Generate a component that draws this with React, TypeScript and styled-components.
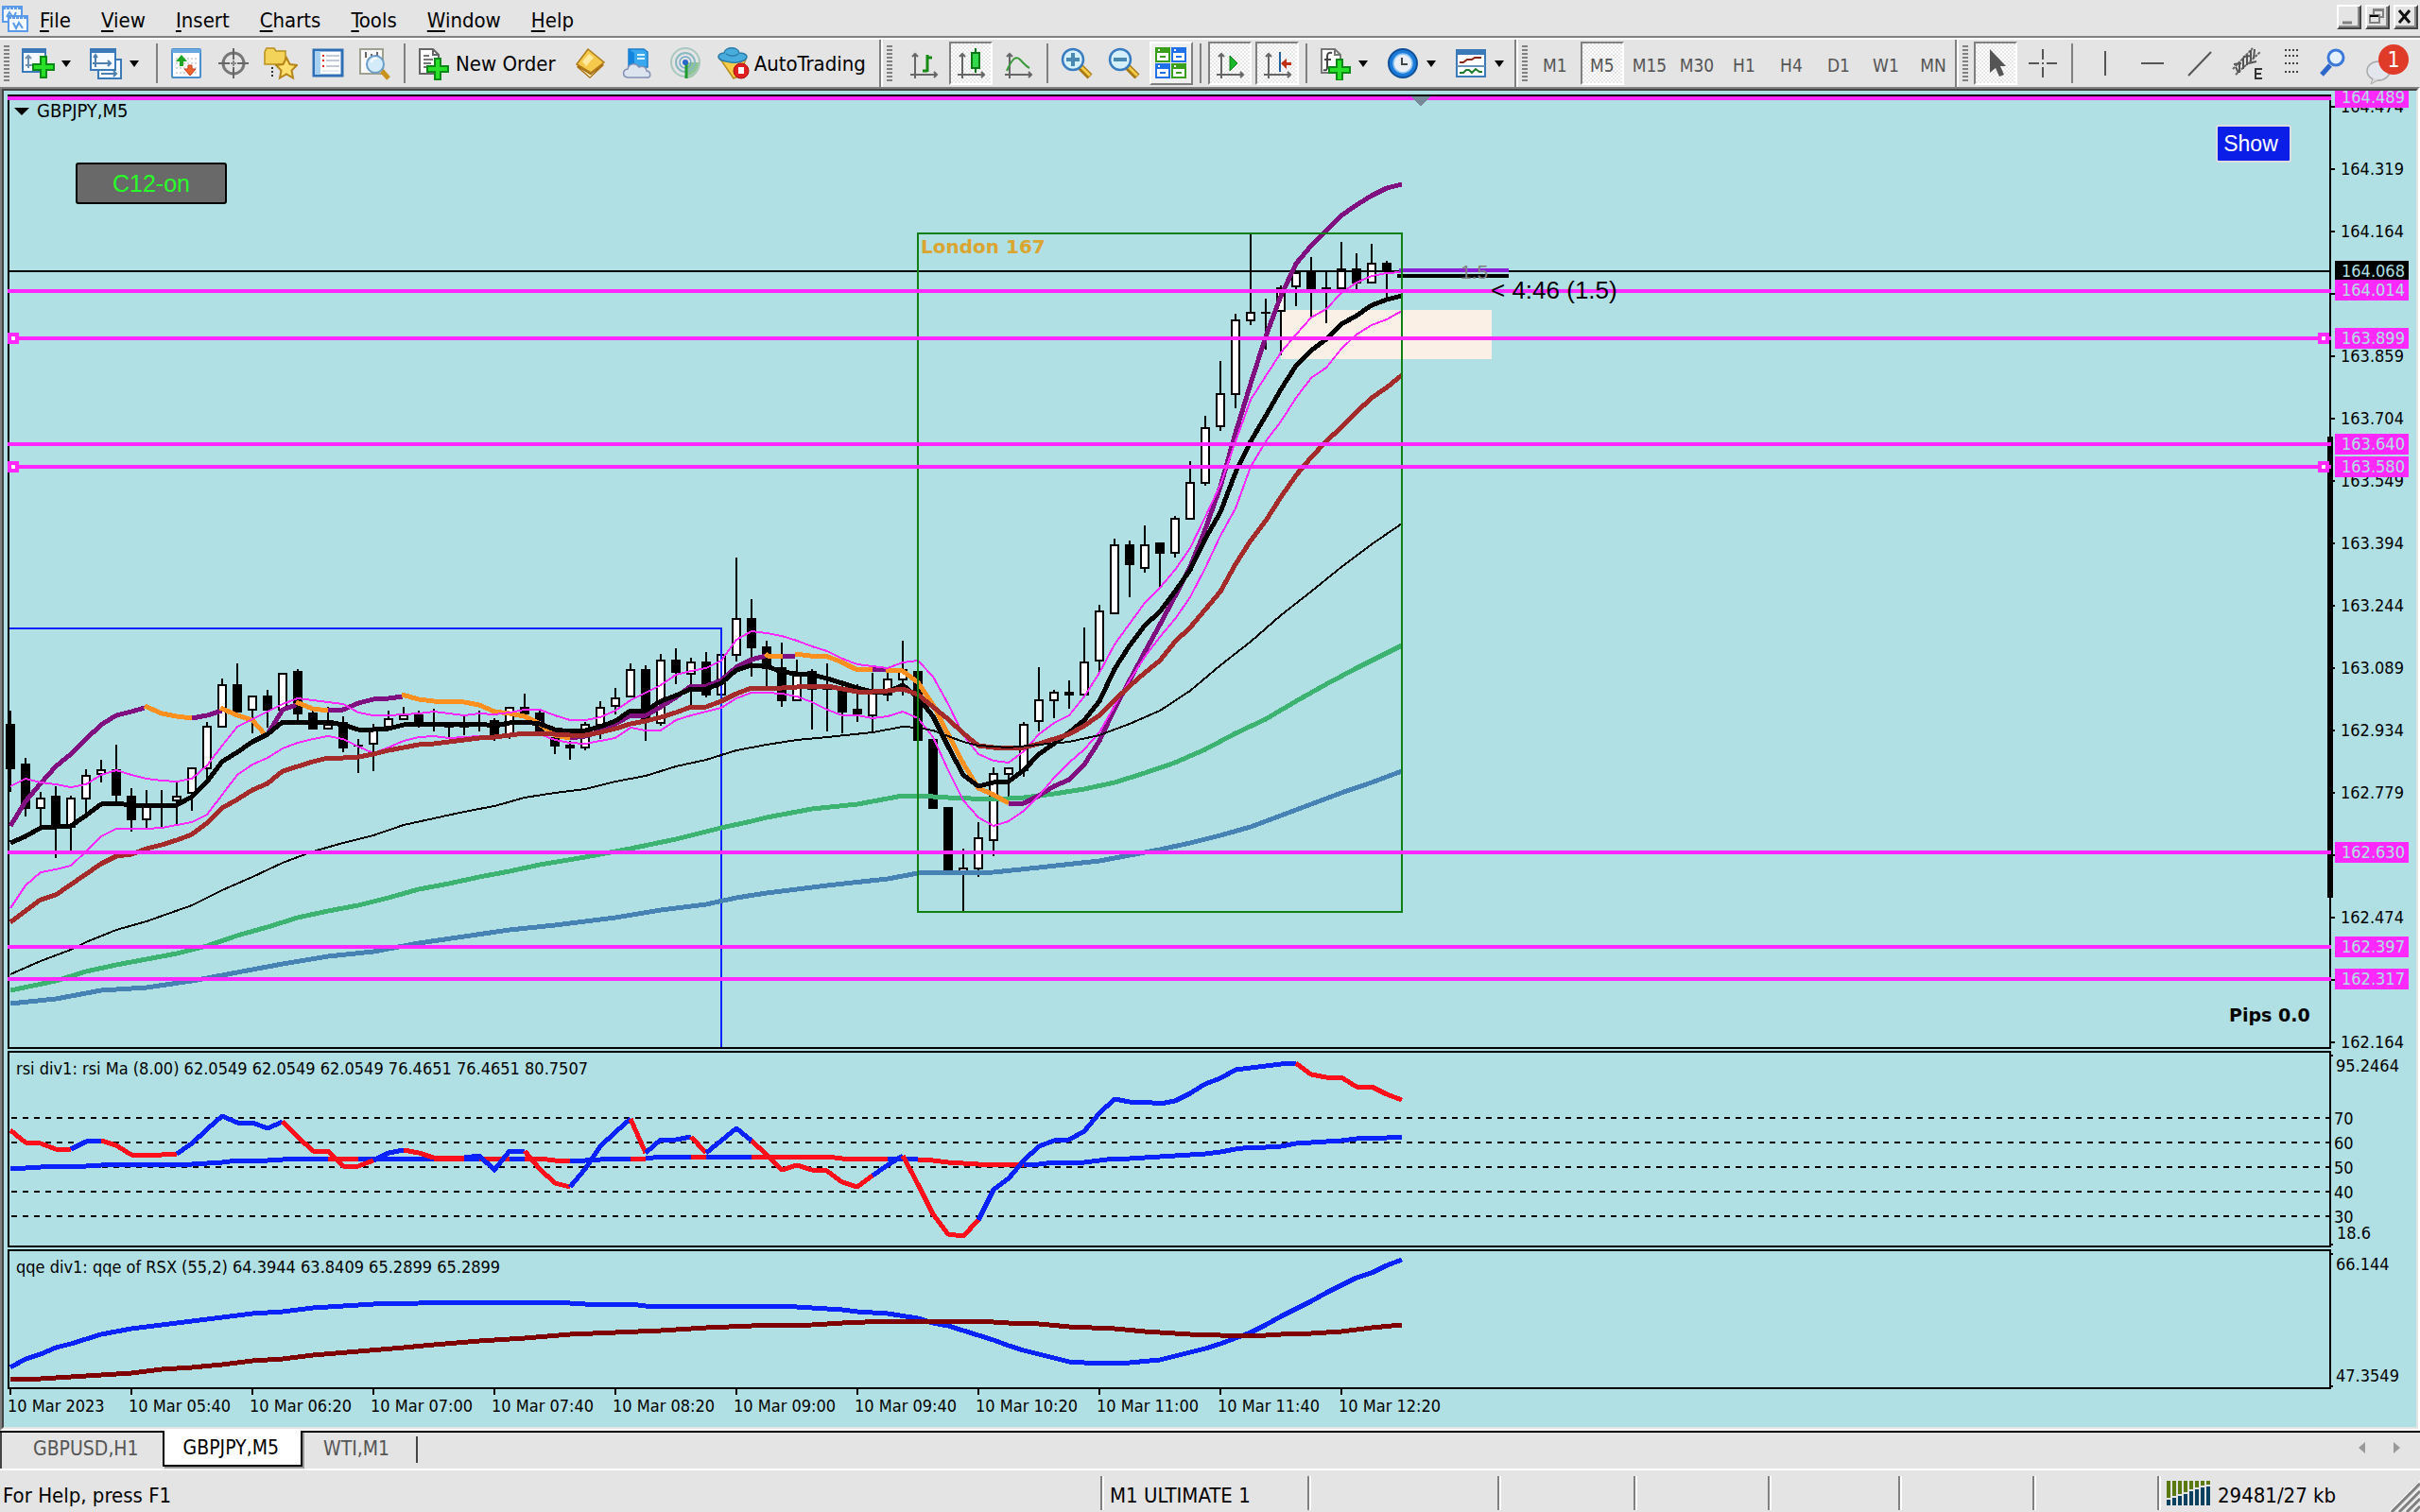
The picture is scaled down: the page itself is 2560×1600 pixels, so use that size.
import React from 'react';
import styled, { createGlobalStyle, css } from 'styled-components';

const UI = `'DejaVu Sans Condensed', 'Noto Sans', sans-serif`;
const FACE = '#e4e4e4';
const SKY = '#b0e0e4';
const MAGENTA = '#ff28ff';
const BLUE = '#0a22ff';
const RED = '#ff0f1c';
const PURPLE = '#800f80';
const ORANGE = '#ff9020';

const GlobalStyle = createGlobalStyle`
  * { box-sizing: border-box; }
  body { margin: 0; background: ${FACE}; font-family: ${UI}; color: #000; }
  button { font-family: inherit; color: inherit; padding: 0; border: 0; background: none; }
`;

const Page = styled.div`
  min-height: 100vh;
  display: flex;
  flex-direction: column;
  background: ${FACE};
`;

/* ---------- menu bar ---------- */

const MenuBar = styled.header`
  display: flex;
  align-items: center;
  justify-content: space-between;
  height: 42px;
  padding: 0 2px;
  border-bottom: 2px solid #fff;
  box-shadow: inset 0 -2px 0 #808080;
`;

const MenuList = styled.nav`
  display: flex;
  align-items: center;
  gap: 32px;
`;

const MenuItem = styled.button`
  font-size: 22px;
  line-height: 32px;
  padding-top: 4px;
  &::first-letter {
    text-decoration: underline;
    text-decoration-thickness: 2px;
    text-underline-offset: 3px;
  }
`;

const AppMark = styled.svg`
  width: 28px;
  height: 28px;
  margin-right: -20px;
`;

const WindowButtons = styled.div`
  display: flex;
  gap: 4px;
  padding-bottom: 4px;
`;

const WindowButton = styled.button`
  width: 26px;
  height: 26px;
  border: 2px solid;
  border-color: #fff #444 #444 #fff;
  background: ${FACE};
  box-shadow: inset -2px -2px 0 #8a8a8a;
  svg { display: block; }
`;

/* ---------- tool bar ---------- */

const ToolBar = styled.div`
  display: flex;
  height: 50px;
`;

const Group = styled.div<{ $last?: boolean }>`
  flex: none;
  display: flex;
  align-items: center;
  padding-left: 4px;
  ${p => !p.$last && css`
    border-right: 2px solid #fff;
    box-shadow: inset -2px 0 0 #808080;
  `}
`;

const Grip = styled.span`
  flex: none;
  width: 6px;
  height: 38px;
  background: repeating-linear-gradient(#808080 0 2px, transparent 2px 4px);
`;

const Divider = styled.span`
  flex: none;
  width: 2px;
  height: 42px;
  margin: 0 5px;
  background: #808080;
`;

const Tool = styled.button<{ $state?: 'pressed' | 'raised' }>`
  flex: none;
  display: flex;
  align-items: center;
  justify-content: center;
  width: 46px;
  height: 46px;
  margin: 0 2px;
  font-size: 19px;
  color: #555;
  border: 2px solid transparent;
  svg { display: block; flex: none; }
  ${p => p.$state === 'pressed' && css`
    border-color: #808080 #fff #fff #808080;
    background: repeating-conic-gradient(#fff 0 25%, #e8e8e8 0 50%) 0 0 / 4px 4px;
  `}
  ${p => p.$state === 'raised' && css`
    border-color: #fff #808080 #808080 #fff;
    background: #f0f0f0;
  `}
`;

const PeriodTool = styled(Tool)`
  padding-top: 3px;
`;

const CompactTool = styled(Tool)`
  width: 40px;
`;

const WideTool = styled(Tool)`
  width: 52px;
`;

const DropTool = styled(Tool)`
  width: 64px;
  margin: 0 4px;
  gap: 7px;
  justify-content: flex-start;
  &::after {
    content: '';
    border: 5px solid transparent;
    border-top: 7px solid #000;
    border-bottom: 0;
  }
`;

const TextTool = styled(Tool)`
  width: auto;
  gap: 4px;
  font-size: 22px;
  color: #000;
`;

const Gap = styled.span<{ $w: number }>`
  flex: none;
  width: ${p => p.$w}px;
`;

/* ---------- chart window ---------- */

const ChartWindow = styled.main`
  position: relative;
  background: ${SKY};
  border: 2px solid;
  border-color: #808080 #fff #fff #808080;
`;

const ChartInner = styled.div`
  border: 2px solid;
  border-color: #444 ${FACE} ${FACE} #444;
`;

const Pane = styled.svg`
  display: block;
  width: 100%;
  height: auto;
  overflow: visible;
  font-family: ${UI};
  font-size: 18px;
`;

const ChartButton = styled.button`
  position: absolute;
  left: 78px;
  top: 78px;
  width: 160px;
  height: 44px;
  border: 2px solid #000;
  border-radius: 3px;
  background: #696969;
  color: #28ff28;
  font: 25px/36px 'Liberation Sans', sans-serif;
`;

const ShowButton = styled(ChartButton)`
  left: auto;
  right: 134px;
  top: 38px;
  width: 80px;
  height: 40px;
  padding-right: 6px;
  border-color: #dcdce0;
  background: #0a1ee8;
  color: #fff;
  font-size: 23px;
`;

/* ---------- tabs and status ---------- */

const TabBar = styled.nav`
  display: flex;
  height: 40px;
  padding-left: 2px;
  border-top: 2px solid #000;
  box-shadow: inset 4px 0 0 -2px #444;
`;

const Tab = styled.button<{ $active?: boolean }>`
  position: relative;
  height: 34px;
  padding: 0 22px;
  font-size: 21px;
  color: #555;
  ${p => p.$active && css`
    height: 38px;
    margin-top: -2px;
    padding: 0 23px 0 20px;
    color: #000;
    background: #fff;
    border: solid #000;
    border-width: 0 2px 2px;
    box-shadow: 2px 2px 0 #999;
  `}
`;

const TabEnd = styled.span`
  width: 2px;
  height: 28px;
  margin: 4px 0 0 6px;
  background: #444;
`;

const TabArrows = styled.svg`
  margin: 9px 18px 0 auto;
`;

const StatusBar = styled.footer`
  flex: 1;
  display: flex;
  align-items: flex-end;
  min-height: 46px;
  padding-bottom: 2px;
  border-top: 2px solid #fff;
  font-size: 22px;
`;

const StatusCell = styled.div<{ $w?: number }>`
  display: flex;
  align-items: center;
  gap: 8px;
  height: 36px;
  padding: 4px 0 0 8px;
  ${p => (p.$w ? `width: ${p.$w}px;` : 'flex: 1;')}
  border-left: 2px solid #808080;
  box-shadow: inset 2px 0 0 #fff;
  &:first-child {
    padding-left: 3px;
    border-left: 0;
    box-shadow: none;
  }
`;

const Bars = styled.svg`
  margin-bottom: 4px;
`;

const Grow = styled.svg`
  flex: none;
  margin-bottom: -2px;
`;

/* ---------- icons ---------- */

const Icon = ({ children }: { children: React.ReactNode }) => (
  <svg width="36" height="36" viewBox="0 0 36 36" fill="none">{children}</svg>
);

const Plus = ({ x, y, s = 1 }: { x: number; y: number; s?: number }) => (
  <path
    d="M-3-11h6v8h8v6h-8v8h-6v-8h-8v-6h8z"
    transform={`translate(${x} ${y}) scale(${s})`}
    fill="#28e028"
    stroke="#0a8a14"
    strokeWidth="2"
  />
);

const Axes = () => (
  <path d="M9 34V8M6 11l3-3 3 3M4 30h28M29 27l3 3-3 3" stroke="#666" strokeWidth="2" />
);

const NewChartIcon = () => (
  <Icon>
    <rect x="2" y="3" width="24" height="24" fill="#f4f9ff" stroke="#3a7ab8" strokeWidth="2" />
    <path d="M1 2h26v5H1z" fill="#3a7ab8" />
    <path d="M8 10v13M5 13l3-3 3 3M5 20h10" stroke="#7090b0" strokeWidth="2" />
    <Plus x={24} y={22} />
  </Icon>
);
const ProfilesIcon = () => (
  <Icon>
    <rect x="10" y="14" width="24" height="20" fill="#f4f9ff" stroke="#3a7ab8" strokeWidth="2" />
    <path d="M13 29h16M26 26l3 3-3 3" stroke="#5080b0" strokeWidth="2" />
    <rect x="2" y="3" width="26" height="22" fill="#f4f9ff" stroke="#3a7ab8" strokeWidth="2" />
    <path d="M1 2h28v5H1z" fill="#3a7ab8" />
    <path d="M7 10v12M4 18h19M20 15l3 3-3 3M5 12l2-3 2 3" stroke="#5080b0" strokeWidth="2" />
  </Icon>
);
const MarketWatchIcon = () => (
  <Icon>
    <rect x="3" y="3" width="30" height="30" rx="1" fill="#fff" stroke="#4a90d0" strokeWidth="2" />
    <path d="M3 3h30v4H3z" fill="#6aa8e0" />
    <path d="M7 13h22M7 18h22M7 23h22M7 28h22" stroke="#d8d8d8" strokeWidth="2" strokeDasharray="2 2" />
    <path d="M13 9l6 7h-4v5h-4v-5H7z" fill="#1fa51f" />
    <path d="M22 31l-6-7h4v-4h4v4h4z" fill="#f0642c" stroke="#c8401c" />
  </Icon>
);
const DataWindowIcon = () => (
  <Icon>
    <circle cx="18" cy="18" r="11" stroke="#777" strokeWidth="3" />
    <path d="M18 2v12M18 22v12M2 18h12M22 18h12" stroke="#666" strokeWidth="2" />
    <path d="M15 18h6M18 15v6" stroke="#888" strokeWidth="2" />
  </Icon>
);
const NavigatorIcon = () => (
  <Icon>
    <path d="M1 6l2-4h8l2 3h10v14H1z" fill="#f3d35a" stroke="#b98f1c" strokeWidth="1.500" />
    <path d="M9 22v12" stroke="#333" strokeWidth="2" strokeDasharray="2 2" />
    <path d="M24 12l3.500 7 7.500 1-5.500 5.500 1.500 8-7-4-7 4 1.500-8L13 20l7.500-1z" fill="#ffe070" stroke="#b5851a" strokeWidth="2" />
  </Icon>
);
const TerminalIcon = () => (
  <Icon>
    <rect x="3" y="4" width="30" height="27" fill="#fff" stroke="#2f6fb5" strokeWidth="3" />
    <path d="M4 5h6v25H4z" fill="#a8d0f0" />
    <path d="M12 10h2M12 15h2M12 21h2" stroke="#e02020" strokeWidth="2" />
    <path d="M16 10h14M16 15h14M16 21h14" stroke="#b0b8c8" strokeWidth="1.500" />
    <path d="M12 26h18" stroke="#d0d8e8" />
  </Icon>
);
const TesterIcon = () => (
  <Icon>
    <rect x="2" y="3" width="24" height="26" fill="#fafafa" stroke="#a0a090" strokeWidth="2" />
    <path d="M8 6v6M14 8v6M20 6v6" stroke="#666" strokeWidth="2" />
    <path d="M25 26l7 8" stroke="#c8921c" strokeWidth="5" />
    <circle cx="18" cy="19" r="9" fill="#d4ebfa" stroke="#6a9cc8" strokeWidth="2" />
    <path d="M14 17c0-3 3-5 6-4" stroke="#fff" strokeWidth="2" />
  </Icon>
);
const NewOrderIcon = () => (
  <Icon>
    <path d="M2 3h14l6 6v20H2z" fill="#fff" stroke="#666" strokeWidth="2" />
    <path d="M16 3v6h6" stroke="#666" strokeWidth="2" />
    <path d="M6 10h6M6 14h10M6 18h8M6 22h6" stroke="#777" strokeWidth="2" />
    <Plus x={21} y={24} />
  </Icon>
);
const MetaEditorIcon = () => (
  <Icon>
    <path d="M3 22L15 5l17 15-15 14z" fill="#b8781a" />
    <path d="M3 19L15 3l17 14-14 11z" fill="#f4c94c" stroke="#b07a18" strokeWidth="1.500" />
    <path d="M4 21l14 9 13-11-14 14z" fill="#f8e8b0" stroke="#a06a10" />
    <path d="M9 16l7-8 5 4-8 9z" fill="#ffe9a0" />
  </Icon>
);
const MarketIcon = () => (
  <Icon>
    <path d="M8 3h16l4 3v16H8z" fill="#38a8f0" stroke="#1c7cc8" strokeWidth="1.500" />
    <path d="M8 3l6 4v14H8z" fill="#1484dc" />
    <path d="M17 9h8M17 13h8" stroke="#d8f0ff" strokeWidth="2" />
    <path d="M8 33c-7 0-7-8-1-9 1-6 9-7 12-2 5-2 8 1 8 4 5 1 5 7 0 7z" fill="#dce4f0" stroke="#8090b4" strokeWidth="1.500" />
  </Icon>
);
const SignalsIcon = () => (
  <Icon>
    <path d="M18 17h15a15 15 0 0 1-14 17z" fill="#58b058" opacity=".6" />
    <circle cx="18" cy="17" r="15" stroke="#a8c8c0" strokeWidth="2" />
    <circle cx="18" cy="17" r="10" stroke="#88b8c0" strokeWidth="2" />
    <circle cx="18" cy="17" r="6" stroke="#70a8c8" strokeWidth="1.500" />
    <path d="M19 17v17" stroke="#1f9a2f" strokeWidth="3" />
    <circle cx="18" cy="17" r="3" fill="#2866c8" />
  </Icon>
);
const AutoTradingIcon = () => (
  <Icon>
    <path d="M3 12l14 4 14-3-6 18-7 3z" fill="#f6cc48" stroke="#b98a1c" strokeWidth="1.500" />
    <path d="M2 11c0-3 4-4 6-4C9 0 23 0 24 7c5 0 8 2 8 4 0 5-11 7-16 6C9 16 2 15 2 11z" fill="#48acdc" stroke="#2a7ba8" strokeWidth="1.500" />
    <path d="M10 8c4 3 10 3 13 0" stroke="#2a7ba8" strokeWidth="1.500" />
    <circle cx="26" cy="26" r="8" fill="#e02020" stroke="#a81010" />
    <rect x="23" y="22" width="6" height="7" fill="#fff" />
  </Icon>
);
const BarChartIcon = () => (
  <Icon>
    <Axes />
    <path d="M22 9v18M22 12h5M17 26h5" stroke="#158a15" strokeWidth="3" />
  </Icon>
);
const CandleIcon = () => (
  <Icon>
    <Axes />
    <path d="M23 2v26" stroke="#0c7a14" strokeWidth="2" />
    <rect x="19" y="7" width="8" height="16" fill="#34d84c" stroke="#0c7a14" strokeWidth="2" />
  </Icon>
);
const LineChartIcon = () => (
  <Icon>
    <Axes />
    <path d="M6 26C12 12 16 10 20 14c4 4 6 7 10 9" stroke="#3a9a3a" strokeWidth="2" />
  </Icon>
);
const ZoomIcon = ({ plus }: { plus?: boolean }) => (
  <Icon>
    <path d="M22 22l10 10" stroke="#a87814" strokeWidth="7" />
    <path d="M23 22l9 9" stroke="#f4cc48" strokeWidth="3" />
    <circle cx="14" cy="14" r="11" fill="#d4f0fc" stroke="#3a7cc0" strokeWidth="2.500" />
    <path d={plus ? 'M7 14h14M14 7v14' : 'M7 14h14'} stroke="#4a88b4" strokeWidth="4" />
  </Icon>
);
const TileIcon = () => (
  <Icon>
    {[[1, 1, '#3aa01c'], [18, 1, '#2070e8'], [1, 18, '#2070e8'], [18, 18, '#3aa01c']].map(([x, y, c]) => (
      <g key={`${x}-${y}`} transform={`translate(${x} ${y})`}>
        <path d="M0 0h16v16H0z" fill={c as string} />
        <path d="M2 6h12v8H2z" fill="#fff" />
        <path d="M5 10h6" stroke={c as string} strokeWidth="2" />
        <path d="M3 3h2" stroke="#fff" strokeWidth="2" />
      </g>
    ))}
  </Icon>
);
const AutoScrollIcon = () => (
  <Icon>
    <Axes />
    <path d="M18 10l8 8-8 8z" fill="#18b828" stroke="#0c7a14" />
  </Icon>
);
const ShiftIcon = () => (
  <Icon>
    <Axes />
    <path d="M21 6v21" stroke="#20609c" strokeWidth="2" />
    <path d="M22 18l6-5v4h5v3h-5v4z" fill="#c03010" />
  </Icon>
);
const IndicatorsIcon = () => (
  <Icon>
    <path d="M4 3h14l6 6v19H4z" fill="#fff" stroke="#777" strokeWidth="2" />
    <path d="M18 3v6h6" stroke="#777" strokeWidth="2" />
    <path d="M15 7c-5-1-5 2-5 5v10c0 3-1 4-4 3M7 14h7" stroke="#444" strokeWidth="2" />
    <Plus x={23} y={25} />
  </Icon>
);
const PeriodIcon = () => (
  <Icon>
    <circle cx="18" cy="18" r="15" fill="#1c7ad8" stroke="#0f4f98" strokeWidth="2" />
    <circle cx="18" cy="18" r="10" fill="#e8eef4" stroke="#8cc4f4" strokeWidth="1.500" />
    <path d="M17 12v7h6" stroke="#444" strokeWidth="2" />
  </Icon>
);
const TemplateIcon = () => (
  <Icon>
    <rect x="3" y="4" width="30" height="28" fill="#fff" stroke="#3a7ab8" strokeWidth="2" />
    <path d="M2 3h32v6H2z" fill="#3a7ab8" />
    <path d="M3 21h30" stroke="#6a94bc" strokeWidth="2" />
    <path d="M6 17h4l4-3h5l3-2h7" stroke="#8c2410" strokeWidth="2" />
    <path d="M6 28h4l3-3h3l3 3 4-4 4 3h3" stroke="#1c7c2c" strokeWidth="2" />
  </Icon>
);
const CursorIcon = () => (
  <Icon>
    <path d="M12 3v25l6-5 4 9 5-2-4-9h6z" fill="#555" />
  </Icon>
);
const CrossIcon = () => (
  <Icon>
    <path d="M18 3v11M18 22v11M3 18h11M22 18h11M17 18h2" stroke="#555" strokeWidth="2" />
  </Icon>
);
const VLineIcon = () => <Icon><path d="M18 5v26" stroke="#555" strokeWidth="2" /></Icon>;
const HLineIcon = () => <Icon><path d="M6 18h24" stroke="#555" strokeWidth="2" /></Icon>;
const TrendIcon = () => <Icon><path d="M6 31L30 6" stroke="#555" strokeWidth="2" /></Icon>;
const ChannelIcon = () => (
  <Icon>
    <path d="M3 24L24 2M6 30L32 6" stroke="#666" strokeWidth="2" strokeDasharray="3 1" />
    <path d="M6 22l3 6M10 18v10M14 12v12M18 9v11M22 4v12M26 3l-1 10M4 19l8-1M14 11l8-1M20 18l8-2" stroke="#555" strokeWidth="2" />
    <path d="M34 24h-7v10h7M27 29h6" stroke="#333" strokeWidth="2" />
  </Icon>
);
const FiboIcon = () => (
  <Icon>
    <path d="M11 4h14M11 10h14M11 18h14M11 27h14" stroke="#444" strokeWidth="2" strokeDasharray="2 2" />
  </Icon>
);
const SearchIcon = () => (
  <Icon>
    <path d="M15 20L6 30" stroke="#2c66c8" strokeWidth="5" />
    <circle cx="21" cy="12" r="8" fill="#e4f0ff" stroke="#3a78dc" strokeWidth="3" />
  </Icon>
);
const Chat = () => (
  <svg width="48" height="46" viewBox="0 0 48 46" fill="none">
    <ellipse cx="14" cy="31" rx="12" ry="10" fill="#e4e6ee" stroke="#a8a8a8" strokeWidth="1.500" />
    <path d="M8 39l-2 6 9-5" fill="#d8d8d8" stroke="#a8a8a8" />
    <circle cx="30" cy="19" r="16" fill="#e03a28" />
    <text x="30" y="27" fill="#fff" fontSize="23" textAnchor="middle" fontFamily={UI}>1</text>
  </svg>
);

/* ---------- chart data: positions per five-minute bar ---------- */

const barX = (k: number) => 11 + 16 * k;

// [high, body top, body bottom, low, rising]
const candles: [number, number, number, number, number][] = [
  [752, 766, 814, 838, 0], [802, 808, 856, 864, 0], [838, 844, 856, 876, 1], [832, 842, 876, 908, 0],
  [842, 844, 876, 900, 1], [814, 820, 846, 862, 1], [804, 814, 820, 828, 1], [788, 814, 842, 848, 0],
  [834, 842, 868, 880, 0], [836, 852, 868, 876, 1], [836, 850, 852, 876, 0], [828, 842, 848, 872, 1],
  [812, 812, 840, 858, 1], [764, 768, 814, 824, 1], [718, 724, 770, 770, 1], [702, 724, 754, 754, 0],
  [736, 736, 752, 776, 1], [730, 736, 752, 770, 0], [712, 712, 752, 752, 1], [708, 710, 756, 762, 0],
  [752, 754, 772, 772, 0], [748, 766, 772, 772, 1], [758, 764, 792, 796, 0], [782, 788, 790, 818, 0],
  [766, 772, 788, 816, 1], [752, 760, 770, 770, 1], [748, 756, 762, 762, 1], [752, 756, 766, 770, 0],
  [750, 764, 766, 774, 0], [766, 768, 770, 780, 0], [758, 768, 770, 778, 0], [752, 764, 766, 774, 0],
  [760, 762, 778, 784, 0], [748, 748, 778, 782, 1], [734, 748, 756, 756, 0], [752, 754, 774, 774, 0],
  [778, 780, 790, 798, 0], [784, 788, 792, 804, 0], [764, 766, 792, 794, 1], [742, 748, 768, 782, 1],
  [728, 738, 748, 756, 1], [702, 708, 738, 738, 1], [704, 708, 762, 784, 0], [692, 698, 766, 768, 1],
  [686, 698, 712, 724, 0], [696, 700, 714, 748, 1], [690, 700, 736, 738, 0], [692, 692, 736, 736, 1],
  [590, 654, 694, 700, 1], [634, 654, 686, 716, 0], [678, 684, 708, 726, 0], [680, 706, 742, 748, 0],
  [698, 714, 742, 742, 1], [708, 710, 730, 772, 0], [702, 728, 730, 774, 0], [720, 730, 754, 776, 0],
  [724, 750, 756, 764, 0], [712, 732, 758, 774, 1], [710, 718, 736, 742, 1], [678, 708, 720, 736, 1],
  [710, 710, 784, 784, 0], [782, 782, 856, 856, 0], [854, 854, 922, 922, 0], [898, 918, 924, 964, 1],
  [870, 886, 920, 928, 1], [812, 818, 890, 906, 1], [812, 812, 820, 848, 1], [764, 766, 816, 822, 1],
  [706, 740, 764, 774, 1], [730, 732, 742, 760, 1], [720, 732, 736, 750, 0], [664, 700, 736, 736, 1],
  [640, 646, 700, 712, 1], [570, 576, 650, 650, 1], [572, 576, 598, 632, 0], [556, 576, 602, 606, 1],
  [574, 574, 586, 622, 0], [546, 548, 586, 590, 1], [488, 510, 550, 550, 1], [440, 452, 512, 514, 1],
  [382, 416, 452, 456, 1], [332, 338, 418, 432, 1], [248, 330, 340, 344, 1], [316, 330, 332, 370, 0],
  [302, 304, 330, 376, 1], [286, 288, 304, 324, 1], [272, 286, 306, 336, 0], [286, 304, 306, 342, 0],
  [256, 284, 306, 306, 1], [268, 284, 300, 306, 0], [258, 278, 300, 300, 1], [276, 278, 288, 316, 0],
];

const fastAverage = [
  892, 885, 876, 875, 874, 863, 851, 850, 852, 852, 852, 852, 843, 827, 806, 796, 785, 777, 764, 764, 764, 764, 767,
  772, 772, 771, 767, 766, 766, 766, 766, 766, 768, 765, 764, 766, 772, 774, 773, 769, 763, 752, 752, 742, 736, 729,
  729, 723, 709, 704, 705, 711, 713, 714, 718, 723, 728, 732, 732, 725, 738, 758, 790, 820, 832, 828, 827, 815, 798,
  787, 775, 762, 742, 708, 683, 662, 647, 626, 603, 570, 542, 500, 467, 440, 412, 387, 371, 359, 343, 334, 323, 317, 313,
];
const brownAverage = [
  976, 964, 952, 947, 936, 925, 914, 906, 904, 898, 894, 889, 883, 871, 855, 846, 836, 829, 816, 811, 806, 802, 802,
  801, 798, 794, 791, 788, 787, 785, 783, 781, 780, 778, 776, 776, 777, 778, 778, 775, 771, 766, 763, 759, 754, 748,
  748, 742, 734, 728, 728, 728, 727, 726, 726, 729, 732, 732, 731, 729, 735, 748, 761, 776, 789, 791, 792, 791, 787,
  782, 777, 768, 757, 741, 726, 712, 699, 679, 664, 645, 626, 597, 572, 551, 526, 503, 484, 467, 452, 436, 421, 410, 397,
];
const upperBand = [
  832, 824, 828, 830, 833, 830, 820, 815, 820, 824, 826, 827, 824, 810, 789, 769, 761, 753, 745, 739, 741, 743, 745,
  754, 757, 757, 756, 755, 753, 755, 757, 755, 756, 754, 751, 751, 757, 762, 762, 759, 752, 741, 733, 725, 714, 710,
  707, 699, 677, 668, 670, 673, 678, 684, 689, 697, 703, 705, 707, 701, 699, 716, 745, 778, 798, 805, 807, 795, 777,
  765, 757, 737, 712, 682, 660, 638, 622, 603, 580, 547, 513, 467, 423, 398, 373, 354, 336, 327, 310, 299, 292, 289, 288,
];
const lowerBand = [
  961, 937, 923, 920, 916, 901, 885, 877, 877, 877, 876, 873, 870, 862, 841, 820, 809, 802, 792, 786, 782, 779, 782,
  790, 797, 791, 784, 780, 779, 781, 780, 779, 780, 778, 775, 777, 783, 786, 787, 784, 781, 770, 773, 773, 762, 757,
  753, 749, 739, 733, 733, 734, 737, 743, 751, 757, 757, 760, 758, 753, 760, 780, 815, 847, 865, 874, 869, 858, 842,
  823, 807, 793, 775, 747, 720, 695, 674, 655, 632, 601, 567, 538, 494, 467, 446, 421, 400, 389, 369, 354, 344, 338, 329,
];

type Knot = [number, number];
const slowBlack: Knot[] = [
  [0, 1031], [2, 1017], [4, 1005], [5, 997], [7, 984], [9, 975], [12, 958], [14, 942], [16, 928], [18, 913], [20, 901],
  [22, 892], [24, 884], [26, 873], [28, 866], [30, 859], [32, 853], [34, 844], [36, 839], [38, 835], [40, 827], [42, 821],
  [44, 811], [46, 804], [48, 794], [50, 788], [52, 783], [54, 780], [57, 775], [59, 769], [60, 770], [61, 773], [62, 779],
  [63, 785], [64, 789], [66, 791], [68, 788], [70, 785], [72, 778], [74, 766], [76, 752], [78, 731], [80, 704], [82, 679],
  [84, 651], [86, 626], [88, 600], [90, 576], [91, 565], [92, 554],
];
const greenAverage: Knot[] = [
  [0, 1048], [3, 1038], [5, 1028], [7, 1021], [9, 1015], [11, 1009], [13, 1001], [15, 990], [17, 981], [19, 971],
  [21, 964], [23, 958], [25, 950], [27, 941], [29, 935], [31, 928], [33, 922], [35, 915], [38, 907], [41, 898], [44, 888],
  [47, 876], [49, 869], [50, 865], [53, 856], [56, 851], [59, 842], [60, 842], [62, 844], [65, 846], [67, 844],
  [69, 840], [71, 835], [73, 828], [75, 818], [77, 807], [79, 793], [81, 776], [83, 761], [85, 742], [87, 724], [89, 707],
  [91, 691], [92, 683],
];
const blueAverage: Knot[] = [
  [0, 1062], [3, 1057], [6, 1048], [9, 1045], [12, 1038], [15, 1029], [18, 1020], [21, 1012], [24, 1007], [27, 998],
  [30, 991], [33, 984], [36, 979], [40, 971], [43, 963], [46, 957], [48, 950], [50, 945], [54, 937], [58, 930],
  [60, 924], [65, 923], [68, 918], [72, 911], [76, 899], [78, 892], [80, 884], [82, 875], [84, 863], [86, 851], [88, 839],
  [90, 828], [92, 816],
];

// trend line, coloured by direction
const trend: [string, string][] = [
  [PURPLE, '11,874 27,848 43,829 59,811 75,798 91,782 107,767 123,757 139,753 153,749'],
  [ORANGE, '153,747 171,755 187,758 203,760'],
  [PURPLE, '203,760 219,757 235,752'],
  [ORANGE, '233,749 251,757 267,762 280,777'],
  [PURPLE, '283,777 291,764 299,751 313,746'],
  [ORANGE, '313,743 331,750 347,752'],
  [PURPLE, '347,752 363,751 379,744 395,740 411,739 426,737'],
  [ORANGE, '425,735 443,740 459,742 475,742 491,743 507,746 523,753 539,755 555,758 571,766 587,778 603,781'],
  [PURPLE, '603,781 619,779 635,774 651,766 667,757 683,757 699,748 715,738 731,726 747,726 763,720 779,706 795,698 810,694'],
  [ORANGE, '810,692 812,694 828,694'],
  [PURPLE, '828,694 841,694'],
  [ORANGE, '841,692 857,694 873,694 889,700 905,708 923,708'],
  [PURPLE, '923,708 937,708'],
  [ORANGE, '937,709 955,710 971,722 987,746 1003,777 1019,808 1035,834 1051,841 1067,850'],
  [PURPLE, '1067,850 1083,850 1099,842 1115,832 1131,825 1147,809 1163,784 1179,750 1195,720 1211,690 1227,661 1243,631 1259,600 1275,560 1291,515 1307,458 1323,406 1339,356 1355,313 1371,279 1387,260 1403,244 1419,228 1435,217 1451,207 1467,199 1483,195'],
];

const rsiFast = [
  1196, 1209, 1210, 1216, 1216, 1208, 1207, 1212, 1222, 1222, 1222, 1221, 1210, 1195, 1181, 1188, 1188, 1194, 1187, 1203,
  1218, 1218, 1234, 1234, 1228, 1220, 1217, 1220, 1225, 1225, 1225, 1223, 1238, 1218, 1218, 1237, 1252, 1256, 1237, 1213,
  1198, 1184, 1220, 1206, 1206, 1203, 1220, 1207, 1194, 1207, 1222, 1238, 1233, 1238, 1239, 1251, 1256, 1244, 1233, 1223,
  1253, 1285, 1306, 1308, 1291, 1259, 1247, 1228, 1213, 1207, 1206, 1197, 1178, 1163, 1166, 1166, 1168, 1165, 1157, 1147,
  1141, 1132, 1130, 1128, 1126, 1125, 1137, 1140, 1140, 1150, 1150, 1158, 1164,
];
const rsiFastRuns: [number, number, string][] = [
  [0, 4, RED], [4, 6, BLUE], [6, 11, RED], [11, 18, BLUE], [18, 24, RED], [24, 26, BLUE], [26, 30, RED], [30, 34, BLUE],
  [34, 37, RED], [37, 41, BLUE], [41, 42, RED], [42, 45, BLUE], [45, 46, RED], [46, 49, BLUE], [49, 57, RED],
  [57, 59, BLUE], [59, 64, RED], [64, 85, BLUE], [85, 92, RED],
];
const rsiSlow = [
  1236, 1236, 1235, 1234, 1234, 1234, 1233, 1232, 1232, 1232, 1232, 1232, 1232, 1231, 1230, 1228, 1228, 1228, 1227, 1226,
  1226, 1226, 1226, 1226, 1226, 1226, 1226, 1226, 1226, 1226, 1226, 1226, 1226, 1226, 1226, 1226, 1228, 1228, 1228, 1227,
  1226, 1226, 1226, 1224, 1224, 1224, 1224, 1224, 1224, 1224, 1224, 1224, 1224, 1224, 1224, 1226, 1226, 1226, 1226, 1226,
  1227, 1228, 1230, 1231, 1232, 1232, 1232, 1232, 1232, 1230, 1230, 1230, 1228, 1226, 1226, 1225, 1224, 1223, 1222, 1221,
  1219, 1216, 1214, 1214, 1213, 1210, 1209, 1208, 1207, 1205, 1204, 1204, 1203,
];
const rsiSlowRuns: [number, number, string][] = [
  [0, 21, BLUE], [21, 23, RED], [23, 28, BLUE], [28, 30, RED], [30, 31, BLUE], [31, 33, RED], [33, 34, BLUE],
  [34, 37, RED], [37, 41, BLUE], [41, 42, RED], [42, 45, BLUE], [45, 46, RED], [46, 49, BLUE], [49, 58, RED],
  [58, 60, BLUE], [60, 67, RED], [67, 92, BLUE],
];

const qqeFast: Knot[] = [
  [0, 1447], [1, 1438], [2, 1433], [3, 1426], [4, 1422], [5, 1417], [6, 1412], [8, 1406], [10, 1402], [12, 1398],
  [14, 1394], [16, 1390], [18, 1388], [20, 1384], [22, 1382], [24, 1380], [27, 1379], [28, 1378], [36, 1378], [38, 1380],
  [41, 1380], [42, 1382], [51, 1382], [53, 1384], [55, 1386], [56, 1388], [58, 1390], [60, 1395], [61, 1400], [62, 1403],
  [63, 1408], [64, 1413], [65, 1418], [66, 1424], [67, 1429], [68, 1433], [69, 1437], [70, 1441], [71, 1442], [74, 1442],
  [76, 1439], [77, 1435], [78, 1431], [79, 1427], [80, 1422], [81, 1416], [82, 1410], [83, 1402], [84, 1393], [85, 1385],
  [86, 1377], [87, 1368], [88, 1360], [89, 1352], [90, 1347], [91, 1339], [92, 1333],
];
const qqeSlow: Knot[] = [
  [0, 1460], [2, 1459], [5, 1456], [8, 1453], [10, 1449], [12, 1447], [14, 1444], [16, 1440], [18, 1438], [20, 1434],
  [23, 1430], [26, 1426], [28, 1423], [31, 1419], [34, 1416], [37, 1412], [40, 1410], [43, 1408], [46, 1405], [49, 1403],
  [53, 1402], [55, 1400], [58, 1398], [64, 1398], [66, 1400], [68, 1401], [70, 1404], [73, 1406], [75, 1409], [78, 1412],
  [80, 1413], [82, 1414], [84, 1412], [86, 1411], [88, 1409], [90, 1405], [92, 1402],
];

const Line = ({ points, color, w = 5 }: { points: string; color: string; w?: number }) => (
  <polyline points={points} fill="none" stroke={color} strokeWidth={w} strokeLinejoin="round" shapeRendering="crispEdges" />
);
const dense = (ys: number[], from = 0, to = ys.length - 1) =>
  ys.slice(from, to + 1).map((y, i) => `${barX(from + i)},${y}`).join(' ');
const sparse = (knots: Knot[]) => knots.map(([k, y]) => `${barX(k)},${y}`).join(' ');

const levels: { y: number; price: string; handles?: boolean; label?: number }[] = [
  { y: 104, price: '164.489', label: 103 },
  { y: 308, price: '164.014', label: 307 },
  { y: 358, price: '163.899', handles: true },
  { y: 470, price: '163.640' },
  { y: 494, price: '163.580', handles: true },
  { y: 902, price: '162.630' },
  { y: 1002, price: '162.397' },
  { y: 1036, price: '162.317' },
];

const scale: [number, string][] = [
  [113, '164.474'], [179, '164.319'], [245, '164.164'], [311, ''], [377, '163.859'], [443, '163.704'], [509, '163.549'],
  [575, '163.394'], [641, '163.244'], [707, '163.089'], [773, '162.934'], [839, '162.779'], [905, ''], [971, '162.474'],
  [1037, ''], [1103, '162.164'],
];

const Badge = ({ y, fill, price }: { y: number; fill: string; price: string }) => (
  <>
    <rect x="2470" y={Math.max(96, y - 11)} width="78" height={y < 107 ? 18 : 22} fill={fill} />
    <text x="2477" y={y + 6} fill={SKY}>{price}</text>
  </>
);

const PricePane = () => (
  <Pane viewBox="4 96 2552 1014" role="img" aria-label="GBPJPY five minute chart">
    <g shapeRendering="crispEdges">
      <path d="M9 1109V101H2465V1109z" fill="none" stroke="#000" strokeWidth="2" />
      <rect x="1355" y="328" width="223" height="52" fill="#faf0e6" />
      {candles.map(([hi, top, bottom, lo, rising], k) => (
        <g key={k}>
          <rect x={barX(k) - 1} y={hi} width="2" height={Math.max(2, lo - hi)} />
          <rect x={barX(k) - 5} y={top} width="10" height={Math.max(2, bottom - top)} />
          {rising === 1 && <rect x={barX(k) - 3} y={top + 2} width="6" height={Math.max(2, bottom - top - 4)} fill="#fff" />}
        </g>
      ))}
      <rect x="10" y="286" width="2454" height="2" />
      <path d="M10 665H763V1108" fill="none" stroke={BLUE} strokeWidth="2" />
    </g>
    <Line points={sparse(blueAverage)} color="#4682b4" />
    <Line points={sparse(greenAverage)} color="#3cb371" />
    {trend.map(([color, points]) => <Line key={points} points={points} color={color} />)}
    <Line points={dense(fastAverage)} color="#000" />
    <Line points={dense(upperBand)} color={MAGENTA} w={2} />
    <Line points={dense(lowerBand)} color={MAGENTA} w={2} />
    <Line points={dense(brownAverage)} color="#a52a2a" />
    <Line points={sparse(slowBlack)} color="#000" w={2} />
    <g shapeRendering="crispEdges">
      <rect x="1480" y="284" width="116" height="4" fill="#8c1fd8" />
      <rect x="1478" y="290" width="118" height="4" />
      <rect x="971" y="247" width="512" height="718" fill="none" stroke="#108014" strokeWidth="2" />
      <rect x="2462" y="462" width="6" height="488" />
      {levels.map(l => (
        <g key={l.y} fill={MAGENTA}>
          <rect x="8" y={l.y - 2} width="2458" height="4" />
          {l.handles && [14, 2458].map(x => (
            <g key={x}>
              <rect x={x - 6} y={l.y - 6} width="12" height="12" />
              <rect x={x - 2} y={l.y - 2} width="4" height="4" fill="#fff" />
            </g>
          ))}
        </g>
      ))}
      <path d="M1493 102h20l-10 11z" fill="#778899" />
    </g>
    <path d="M15 114h16l-8 8z" />
    <text x="39" y="124" fontSize="20">GBPJPY,M5</text>
    <text x="974" y="268" fontFamily="'DejaVu Sans', sans-serif" fontWeight="700" fontSize="20" fill="#daa530">London 167</text>
    <text x="1545" y="295" fontFamily="'Liberation Sans', sans-serif" fontSize="21" fill="#808080">1.5</text>
    <text x="1577" y="316" fontFamily="'Liberation Sans', sans-serif" fontSize="26">&lt; 4:46 (1.5)</text>
    <text x="2358" y="1081" fontFamily="'DejaVu Sans', sans-serif" fontWeight="700" fontSize="19">Pips 0.0</text>
    {scale.map(([y, price]) => (
      <g key={y}>
        <rect x="2466" y={y - 1} width="4" height="2" />
        <text x="2476" y={y + 6}>{price}</text>
      </g>
    ))}
    <Badge y={287} fill="#000" price="164.068" />
    {levels.map(l => <Badge key={l.y} y={l.label ?? l.y} fill={MAGENTA} price={l.price} />)}
  </Pane>
);

const RsiPane = () => (
  <Pane viewBox="4 1110 2552 210" role="img" aria-label="RSI">
    <path d="M9 1319V1113H2465V1319z" fill="none" stroke="#000" strokeWidth="2" shapeRendering="crispEdges" />
    {[1183, 1209, 1235, 1261, 1287].map((y, i) => (
      <g key={y}>
        <path d={`M12 ${y}H2464`} stroke="#000" strokeWidth="2" strokeDasharray="6 6" shapeRendering="crispEdges" />
        <text x="2469" y={y + 7}>{70 - i * 10}</text>
      </g>
    ))}
    {rsiSlowRuns.map(([a, b, c]) => <Line key={a} points={dense(rsiSlow, a, b)} color={c} />)}
    {rsiFastRuns.map(([a, b, c]) => <Line key={a} points={dense(rsiFast, a, b)} color={c} />)}
    <path d="M2466 1117h2M2466 1317h2" stroke="#000" strokeWidth="2" />
    <text x="17" y="1137">rsi div1: rsi Ma (8.00) 62.0549 62.0549 62.0549 76.4651 76.4651 80.7507</text>
    <text x="2471" y="1134">95.2464</text>
    <text x="2472" y="1311">18.6</text>
  </Pane>
);

const QqePane = () => (
  <Pane viewBox="4 1320 2552 150" role="img" aria-label="QQE">
    <path d="M9 1469V1323H2465V1469z" fill="none" stroke="#000" strokeWidth="2" shapeRendering="crispEdges" />
    <Line points={sparse(qqeFast)} color={BLUE} />
    <Line points={sparse(qqeSlow)} color="#800000" />
    <path d="M2466 1327h2M2466 1467h2" stroke="#000" strokeWidth="2" />
    <text x="17" y="1347">qqe div1: qqe of RSX (55,2) 64.3944 63.8409 65.2899 65.2899</text>
    <text x="2471" y="1344">66.144</text>
    <text x="2471" y="1462">47.3549</text>
  </Pane>
);

const times = ['2023', '05:40', '06:20', '07:00', '07:40', '08:20', '09:00', '09:40', '10:20', '11:00', '11:40', '12:20'];

const TimeAxis = () => (
  <Pane viewBox="4 1470 2552 40" role="img" aria-label="Time axis">
    {times.map((t, i) => (
      <g key={t}>
        <rect x={barX(i * 8) - 1} y="1470" width="2" height="6" />
        <text x={barX(i * 8) - 3} y="1494">10 Mar {t}</text>
      </g>
    ))}
  </Pane>
);

/* ---------- application ---------- */

const periods = ['M1', 'M5', 'M15', 'M30', 'H1', 'H4', 'D1', 'W1', 'MN'];

export default function App() {
  return (
    <Page>
      <GlobalStyle />
      <MenuBar>
        <MenuList>
          <AppMark viewBox="0 0 28 28" fill="#f4f9ff" stroke="#5a9ae8" strokeWidth="2">
            <rect x="1" y="1" width="20" height="16" />
            <path d="M1 2h20" strokeWidth="4" strokeDasharray="3 1" />
            <path d="M5 12l3-5 4 6 3-6" fill="none" />
            <rect x="7" y="11" width="20" height="16" />
            <path d="M7 12h20" strokeWidth="4" strokeDasharray="3 1" />
            <path d="M12 18l3 6 3-6 4 6" fill="none" />
          </AppMark>
          {['File', 'View', 'Insert', 'Charts', 'Tools', 'Window', 'Help'].map(m => <MenuItem key={m}>{m}</MenuItem>)}
        </MenuList>
        <WindowButtons>
          <WindowButton aria-label="Minimize">
            <svg width="22" height="22"><path d="M4 17h10" stroke="#808080" strokeWidth="3" /></svg>
          </WindowButton>
          <WindowButton aria-label="Restore">
            <svg width="22" height="22" fill="none" stroke="#808080" strokeWidth="2"><path d="M7 8V3h10v8h-4M7 4h10" /><rect x="3" y="9" width="10" height="8" /><path d="M3 10h9" stroke="#000" /></svg>
          </WindowButton>
          <WindowButton aria-label="Close">
            <svg width="22" height="22"><path d="M4 4l11 13M15 4L4 17" stroke="#111" strokeWidth="3" /></svg>
          </WindowButton>
        </WindowButtons>
      </MenuBar>

      <ToolBar>
        <Group>
          <Grip /><Gap $w={6} />
          <DropTool aria-label="New chart"><NewChartIcon /></DropTool>
          <DropTool aria-label="Profiles"><ProfilesIcon /></DropTool>
          <Divider />
          <Tool aria-label="Market Watch"><MarketWatchIcon /></Tool>
          <Tool aria-label="Data Window"><DataWindowIcon /></Tool>
          <Tool aria-label="Navigator"><NavigatorIcon /></Tool>
          <Tool aria-label="Terminal"><TerminalIcon /></Tool>
          <Tool aria-label="Strategy Tester"><TesterIcon /></Tool>
          <Divider />
          <Gap $w={4} />
          <TextTool><NewOrderIcon />New Order</TextTool>
          <Gap $w={8} />
          <Tool aria-label="MetaEditor"><MetaEditorIcon /></Tool>
          <Tool aria-label="Market"><MarketIcon /></Tool>
          <Tool aria-label="Signals"><SignalsIcon /></Tool>
          <Gap $w={4} />
          <TextTool><AutoTradingIcon />AutoTrading</TextTool>
          <Gap $w={12} />
        </Group>
        <Group>
          <Grip /><Gap $w={8} />
          <Tool aria-label="Bar Chart"><BarChartIcon /></Tool>
          <Tool aria-label="Candlesticks" $state="pressed"><CandleIcon /></Tool>
          <Tool aria-label="Line Chart"><LineChartIcon /></Tool>
          <Divider />
          <Tool aria-label="Zoom In"><ZoomIcon plus /></Tool>
          <Tool aria-label="Zoom Out"><ZoomIcon /></Tool>
          <Tool aria-label="Tile Windows" $state="raised"><TileIcon /></Tool>
          <Divider />
          <Tool aria-label="Auto Scroll" $state="pressed"><AutoScrollIcon /></Tool>
          <Tool aria-label="Chart Shift" $state="pressed"><ShiftIcon /></Tool>
          <Divider />
          <DropTool aria-label="Indicators"><IndicatorsIcon /></DropTool>
          <DropTool aria-label="Periods"><PeriodIcon /></DropTool>
          <DropTool aria-label="Templates"><TemplateIcon /></DropTool>
        </Group>
        <Group>
          <Grip /><Gap $w={4} />
          {periods.map(p => <PeriodTool key={p} $state={p === 'M5' ? 'pressed' : undefined}>{p}</PeriodTool>)}
        </Group>
        <Group $last>
          <Grip /><Gap $w={4} />
          <Tool aria-label="Cursor" $state="pressed"><CursorIcon /></Tool>
          <Tool aria-label="Crosshair"><CrossIcon /></Tool>
          <Divider />
          <Gap $w={4} />
          <Tool aria-label="Vertical Line"><VLineIcon /></Tool>
          <Tool aria-label="Horizontal Line"><HLineIcon /></Tool>
          <Tool aria-label="Trendline"><TrendIcon /></Tool>
          <Tool aria-label="Equidistant Channel"><ChannelIcon /></Tool>
          <CompactTool aria-label="Fibonacci Retracement"><FiboIcon /></CompactTool>
          <CompactTool aria-label="Search"><SearchIcon /></CompactTool>
          <Gap $w={8} />
          <WideTool aria-label="Messages"><Chat /></WideTool>
        </Group>
      </ToolBar>

      <ChartWindow>
        <ChartInner>
          <PricePane />
          <RsiPane />
          <QqePane />
          <TimeAxis />
        </ChartInner>
        <ChartButton>C12-on</ChartButton>
        <ShowButton>Show</ShowButton>
      </ChartWindow>

      <TabBar>
        <Gap $w={11} />
        <Tab>GBPUSD,H1</Tab>
        <Gap $w={3} />
        <Tab $active>GBPJPY,M5</Tab>
        <Tab>WTI,M1</Tab>
        <TabEnd />
        <TabArrows width="48" height="14" fill="#999"><path d="M8 1v12L1 7zM38 1v12l7-6z" /></TabArrows>
      </TabBar>

      <StatusBar>
        <StatusCell>For Help, press F1</StatusCell>
        <StatusCell $w={219}>M1 ULTIMATE 1</StatusCell>
        <StatusCell $w={201} />
        <StatusCell $w={144} />
        <StatusCell $w={142} />
        <StatusCell $w={138} />
        <StatusCell $w={142} />
        <StatusCell $w={132} />
        <StatusCell $w={246}>
          <Bars width="46" height="26" shapeRendering="crispEdges">
            {[18, 16, 14, 12, 9, 7, 5, 4].map((h, i) => (
              <g key={i}>
                <rect x={i * 6} y="0" width="4" height={h} fill="#5a7a10" />
                <rect x={i * 6} y={h + 2} width="4" height={24 - h} fill="#0a4060" />
              </g>
            ))}
          </Bars>
          29481/27 kb
        </StatusCell>
        <Grow width="32" height="34" fill="none">
          <path d="M2 34L32 4M10 34L32 12M18 34l14-14M26 34l6-6" stroke="#808080" strokeWidth="3" />
          <path d="M0 33L32 1M8 33L32 9M16 33l16-16M24 33l8-8" stroke="#fff" strokeWidth="1" />
        </Grow>
      </StatusBar>
    </Page>
  );
}
